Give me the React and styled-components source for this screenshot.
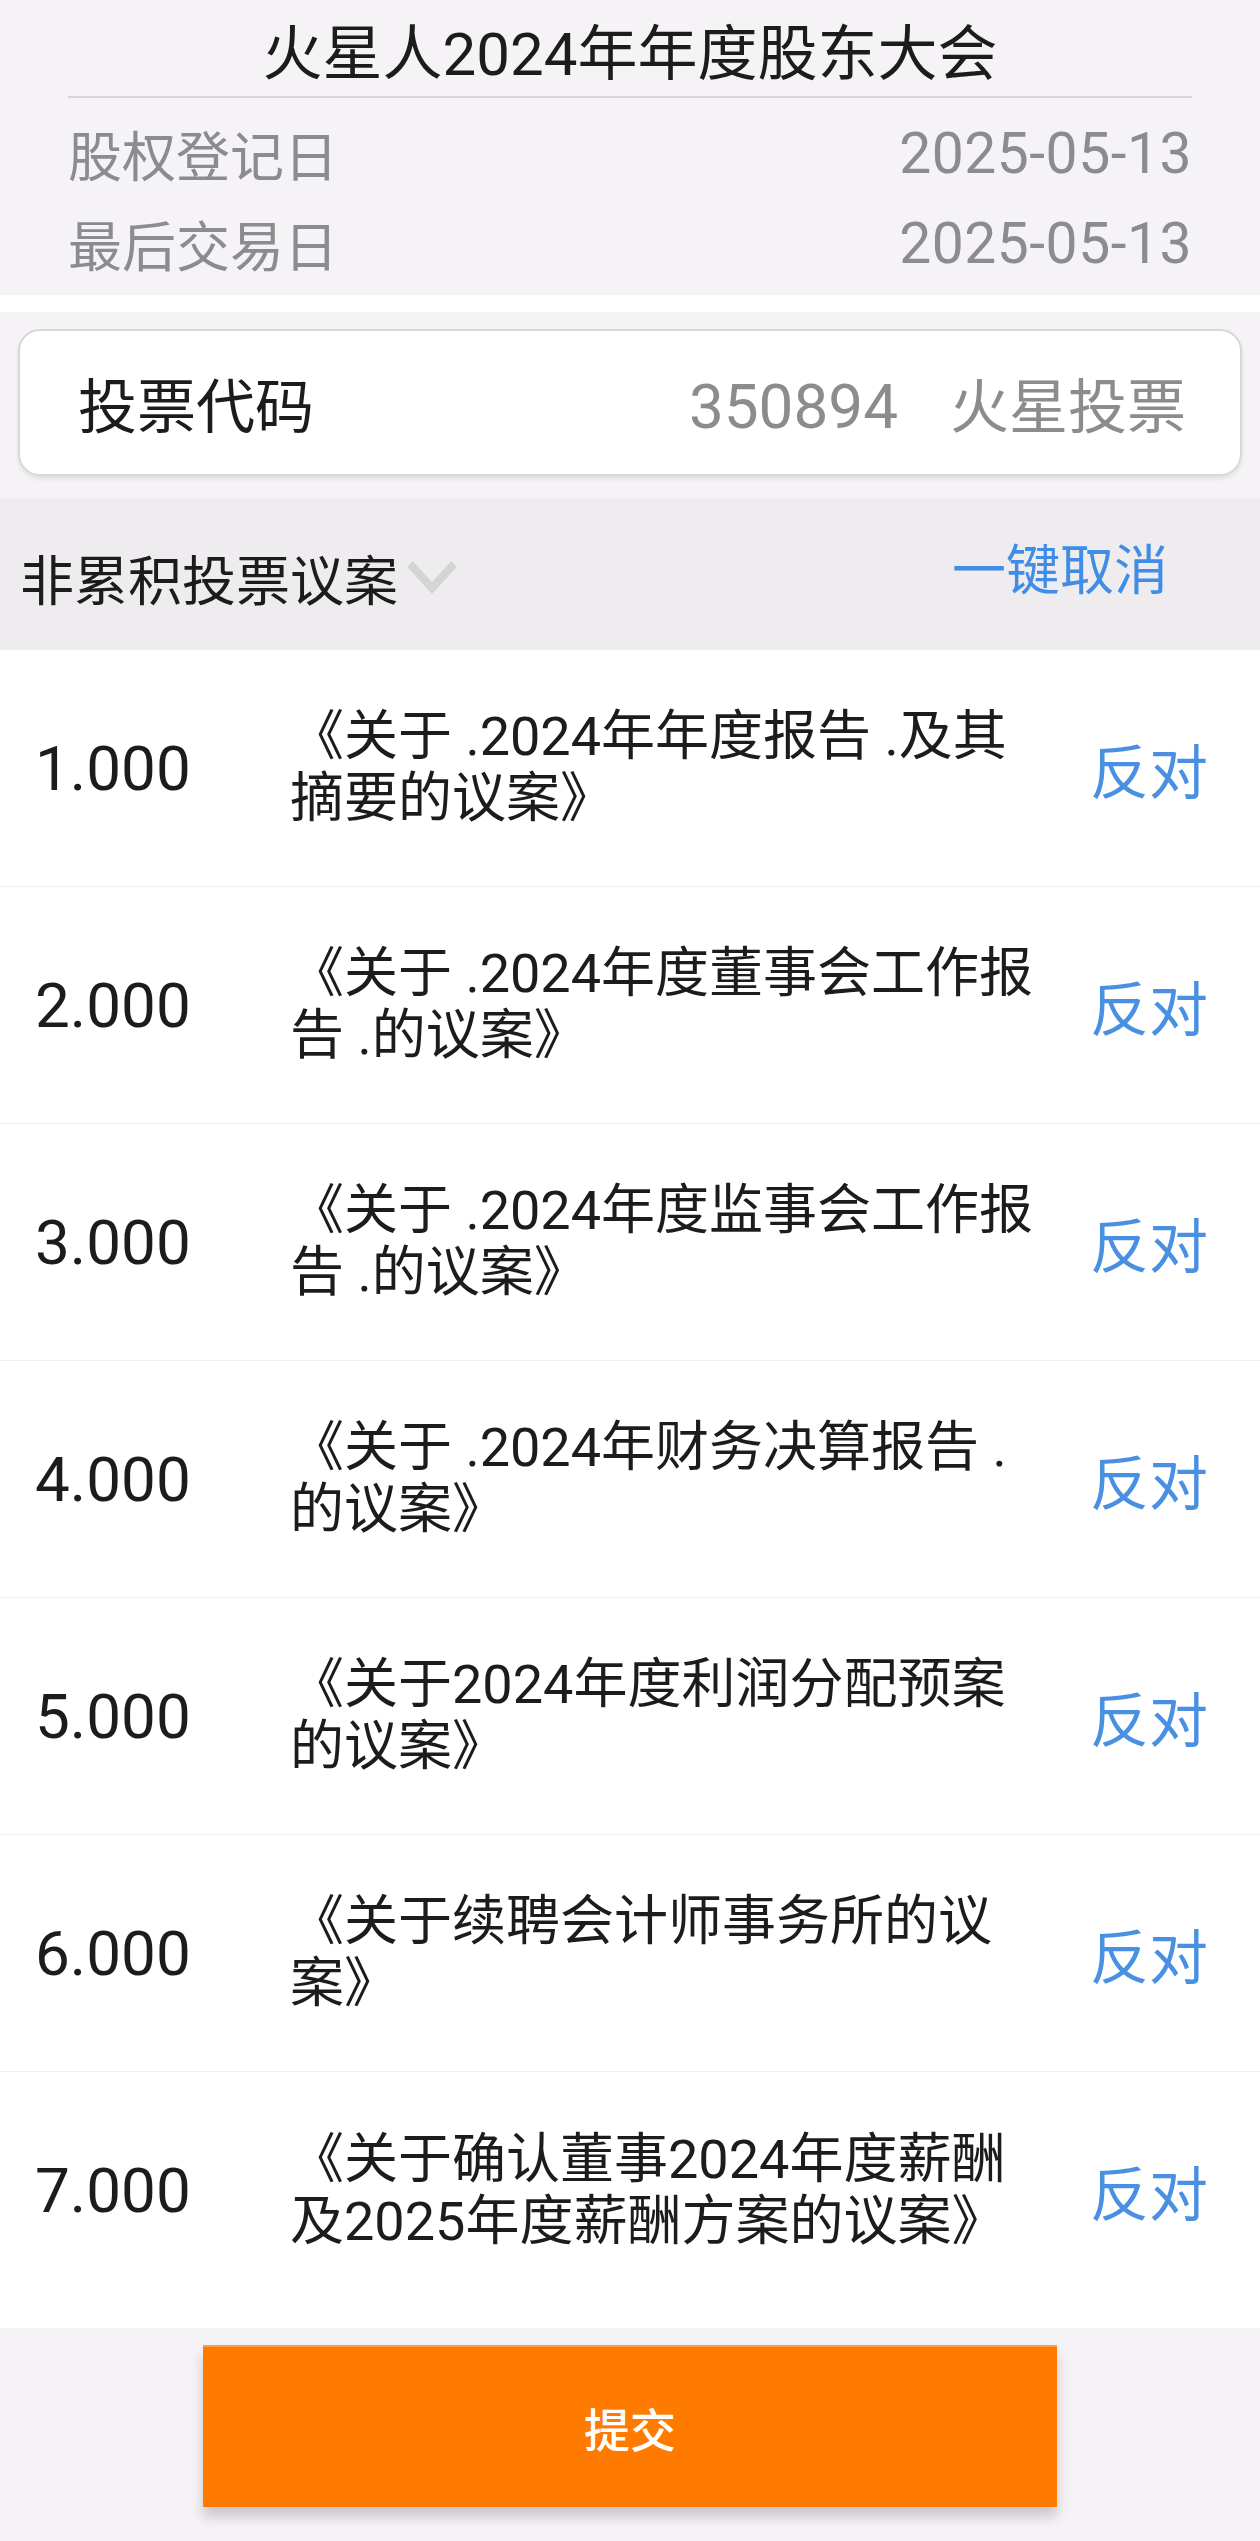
import React from "react"
import styled, { createGlobalStyle } from "styled-components"

const GlobalStyle = createGlobalStyle`
  body {
    margin: 0;
    background: #ffffff;
    font-family: Roboto, "Noto Sans CJK SC", sans-serif;
    color: #1c1c1c;
  }
`

const Page = styled.div`
  width: 1260px;
  display: flex;
  flex-direction: column;
`

const Header = styled.div`
  background: #f6f3f6;
  padding: 0 68px 7px;
`

const Title = styled.div`
  padding-top: 14px;
  line-height: 82px;
  font-size: 60px;
  font-weight: 400;
  text-align: center;
  border-bottom: 2px solid #d6d4d7;
  margin-bottom: 10px;
`

const InfoRow = styled.div`
  display: flex;
  justify-content: space-between;
  align-items: center;
  height: 90px;
  color: #8c8b8d;
`

const InfoLabel = styled.span`
  font-size: 54px;
`

const InfoDate = styled.span`
  font-size: 57px;
  letter-spacing: 0.5px;
`

const Gap = styled.div`
  height: 17px;
  background: #ffffff;
`

const CodeSection = styled.div`
  background: #f6f3f6;
  padding: 17px 18px 22px;
`

const CodeCard = styled.div`
  height: 147px;
  box-sizing: border-box;
  background: #ffffff;
  border: 2px solid #d9d7d9;
  border-radius: 22px;
  box-shadow: 0 3px 4px rgba(0, 0, 0, 0.08);
  display: flex;
  align-items: center;
  justify-content: space-between;
  padding: 0 54px 0 58px;
`

const CodeLabel = styled.span`
  font-size: 59px;
  color: #1c1c1c;
`

const CodeValue = styled.span`
  font-size: 59px;
  color: #8c8b8d;
  display: flex;
  align-items: baseline;
  gap: 52px;
`

const Digits = styled.span`
  font-size: 62px;
`

const SectionBar = styled.div`
  height: 152px;
  background: #efecef;
  display: flex;
  align-items: center;
  justify-content: space-between;
  padding: 0 92px 0 20px;
`

const SectionTitle = styled.div`
  display: flex;
  align-items: center;
  gap: 8px;
  font-size: 54px;
  padding-top: 6px;
`

const CancelAll = styled.span`
  font-size: 54px;
  color: #3f8de4;
  padding-bottom: 16px;
`

const List = styled.div`
  background: #ffffff;
  padding-bottom: 19px;
`

const Row = styled.div`
  height: 237px;
  box-sizing: border-box;
  display: grid;
  grid-template-columns: 255px 748px 1fr;
  align-items: center;
  padding-left: 35px;
  border-bottom: ${p => (p.$last ? "none" : "1.5px solid #f1f0f1")};
`

const RowNo = styled.span`
  font-size: 62px;
  color: #1c1c1c;
`

const RowText = styled.div`
  font-size: 54px;
  line-height: 62px;
  color: #1c1c1c;
`

const Oppose = styled.span`
  justify-self: end;
  padding-right: 52px;
  font-size: 59px;
  color: #4a90e2;
`

const Footer = styled.div`
  background: #f6f3f6;
  padding: 17px 0 34px;
  display: flex;
  justify-content: center;
`

const SubmitButton = styled.button`
  width: 854px;
  height: 162px;
  border: none;
  border-top: 2px solid #ffa040;
  background: #ff7b00;
  color: #ffffff;
  font-family: Roboto, "Noto Sans CJK SC", sans-serif;
  font-size: 46px;
  font-weight: 500;
  box-shadow: 0 10px 12px rgba(0, 0, 0, 0.18);
  cursor: pointer;
`

const Chevron = () => (
  <svg width="52" height="34" viewBox="0 0 52 34">
    <polyline points="4,4 26,28 48,4" fill="none" stroke="#d4d4d4" strokeWidth="8" />
  </svg>
)

const proposals = [
  { no: "1.000", text: "《关于 .2024年年度报告 .及其摘要的议案》" },
  { no: "2.000", text: "《关于 .2024年度董事会工作报告 .的议案》" },
  { no: "3.000", text: "《关于 .2024年度监事会工作报告 .的议案》" },
  { no: "4.000", text: "《关于 .2024年财务决算报告 .的议案》" },
  { no: "5.000", text: "《关于2024年度利润分配预案的议案》" },
  { no: "6.000", text: "《关于续聘会计师事务所的议案》" },
  { no: "7.000", text: "《关于确认董事2024年度薪酬及2025年度薪酬方案的议案》" },
]

export default function App() {
  return (
    <Page>
      <GlobalStyle />
      <Header>
        <Title>火星人2024年年度股东大会</Title>
        <InfoRow>
          <InfoLabel>股权登记日</InfoLabel>
          <InfoDate>2025-05-13</InfoDate>
        </InfoRow>
        <InfoRow>
          <InfoLabel>最后交易日</InfoLabel>
          <InfoDate>2025-05-13</InfoDate>
        </InfoRow>
      </Header>
      <Gap />
      <CodeSection>
        <CodeCard>
          <CodeLabel>投票代码</CodeLabel>
          <CodeValue>
            <Digits>350894</Digits>
            <span>火星投票</span>
          </CodeValue>
        </CodeCard>
      </CodeSection>
      <SectionBar>
        <SectionTitle>
          非累积投票议案
          <Chevron />
        </SectionTitle>
        <CancelAll>一键取消</CancelAll>
      </SectionBar>
      <List>
        {proposals.map((p, i) => (
          <Row key={p.no} $last={i === proposals.length - 1}>
            <RowNo>{p.no}</RowNo>
            <RowText>{p.text}</RowText>
            <Oppose>反对</Oppose>
          </Row>
        ))}
      </List>
      <Footer>
        <SubmitButton>提交</SubmitButton>
      </Footer>
    </Page>
  )
}
